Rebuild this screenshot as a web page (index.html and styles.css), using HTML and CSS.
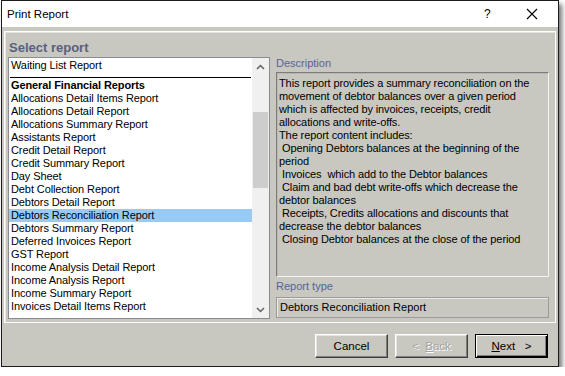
FILE: index.html
```html
<!DOCTYPE html>
<html>
<head>
<meta charset="utf-8">
<link rel="stylesheet" href="styles.css">
</head>
<body>
<div class="window">
  <div class="titlebar">
    <span class="title">Print Report</span>
    <span class="help">?</span>
    <span class="close"><svg width="12" height="12" viewBox="0 0 12 12"><path d="M1 1L11 11M11 1L1 11" stroke="#000" stroke-width="1.1" fill="none"/></svg></span>
  </div>
  <div class="body">
    <div class="panel">
      <div class="left">
        <div class="heading">Select report</div>
        <div class="listbox">
          <div class="list">
            <div class="item">Waiting List Report</div>
            <div class="sep"></div>
            <div class="item bold">General Financial Reports</div>
            <div class="item">Allocations Detail Items Report</div>
            <div class="item">Allocations Detail Report</div>
            <div class="item">Allocations Summary Report</div>
            <div class="item">Assistants Report</div>
            <div class="item">Credit Detail Report</div>
            <div class="item">Credit Summary Report</div>
            <div class="item">Day Sheet</div>
            <div class="item">Debt Collection Report</div>
            <div class="item">Debtors Detail Report</div>
            <div class="item selected">Debtors Reconciliation Report</div>
            <div class="item">Debtors Summary Report</div>
            <div class="item">Deferred Invoices Report</div>
            <div class="item">GST Report</div>
            <div class="item">Income Analysis Detail Report</div>
            <div class="item">Income Analysis Report</div>
            <div class="item">Income Summary Report</div>
            <div class="item">Invoices Detail Items Report</div>
          </div>
          <div class="scrollbar">
            <div class="arrow"><svg width="9" height="6" viewBox="0 0 9 6"><path d="M1 5L4.5 1.5L8 5" stroke="#606060" stroke-width="1.5" fill="none"/></svg></div>
            <div class="track"><div class="thumb"></div></div>
            <div class="arrow"><svg width="9" height="6" viewBox="0 0 9 6"><path d="M1 1L4.5 4.5L8 1" stroke="#606060" stroke-width="1.5" fill="none"/></svg></div>
          </div>
        </div>
      </div>
      <div class="right">
        <div class="label">Description</div>
        <div class="desc">
          <div>This report provides a summary reconciliation on the</div>
          <div>movement of debtor balances over a given period</div>
          <div>which is affected by invoices, receipts, credit</div>
          <div>allocations and write-offs.</div>
          <div>The report content includes:</div>
          <div> Opening Debtors balances at the beginning of the</div>
          <div>period</div>
          <div> Invoices  which add to the Debtor balances</div>
          <div> Claim and bad debt write-offs which decrease the</div>
          <div>debtor balances</div>
          <div> Receipts, Credits allocations and discounts that</div>
          <div>decrease the debtor balances</div>
          <div> Closing Debtor balances at the close of the period</div>
        </div>
        <div class="label label-type">Report type</div>
        <div class="field">Debtors Reconciliation Report</div>
      </div>
    </div>
    <div class="buttons">
      <div class="btn">Cancel</div>
      <div class="btn disabled">&lt;&nbsp;&nbsp;<u>B</u>ack</div>
      <div class="btn default"><u>N</u>ext&nbsp;&nbsp;&nbsp;&gt;</div>
    </div>
  </div>
</div>
</body>
</html>
```
FILE: styles.css
```css
html, body {
  margin: 0;
  padding: 0;
  background: #ffffff;
}
body {
  font-family: "Liberation Sans", Arial, sans-serif;
  font-size: 11px;
  color: #000;
}
.window {
  box-sizing: border-box;
  width: 558px;
  height: 367px;
  margin-left: 1px;
  border: 1px solid #1c1c1c;
  background: #c8c7c0;
  box-shadow: 3px 4px 5px rgba(0, 0, 0, 0.55);
  display: flex;
  flex-direction: column;
}
.titlebar {
  height: 26px;
  background: #ffffff;
  display: flex;
  align-items: center;
  flex-shrink: 0;
}
.title {
  font-size: 11.5px;
  margin-left: 5px;
  flex: 1;
  padding-bottom: 1px;
}
.help {
  font-size: 12px;
  width: 12px;
  margin-right: 30px;
}
.close {
  display: flex;
  margin-right: 20px;
}
.body {
  flex: 1;
  display: flex;
  flex-direction: column;
  padding-top: 4px;
}
.panel {
  box-sizing: border-box;
  height: 292px;
  margin: 0 2px;
  border: 1px solid #ffffff;
  box-shadow: inset 1px 1px 0 #e4e3de;
  display: flex;
  padding-left: 3px;
}
.left {
  display: flex;
  flex-direction: column;
  width: 262px;
}
.heading {
  font-size: 13px;
  font-weight: bold;
  color: #58617f;
  line-height: 16px;
  margin-top: 8px;
  margin-bottom: 1px;
  padding-left: 1px;
}
.listbox {
  box-sizing: border-box;
  height: 262px;
  border: 1px solid #8a8c92;
  background: #ffffff;
  display: flex;
  overflow: hidden;
}
.list {
  width: 243px;
  overflow: hidden;
  padding-top: 1px;
  letter-spacing: -0.1px;
}
.item {
  height: 13px;
  line-height: 13px;
  padding-left: 2px;
  white-space: nowrap;
}
.item.bold {
  font-weight: bold;
}
.item.selected {
  background: #99c9f5;
}
.sep {
  box-sizing: border-box;
  height: 6px;
  margin: 0 1px 1px 1px;
  border-bottom: 1px solid #000;
}
.scrollbar {
  width: 17px;
  background: #f0f0f0;
  display: flex;
  flex-direction: column;
}
.arrow {
  height: 17px;
  display: flex;
  align-items: center;
  justify-content: center;
}
.track {
  flex: 1;
  padding-top: 37px;
}
.thumb {
  height: 76px;
  background: #cdcdcd;
  margin: 0 1px;
}
.right {
  display: flex;
  flex-direction: column;
  width: 273px;
  margin-left: 6px;
}
.label {
  color: #56649a;
  line-height: 13px;
  margin-top: 25px;
}
.label-type {
  margin-top: 3px;
}
.desc {
  box-sizing: border-box;
  height: 205px;
  margin-top: 2px;
  border: 1px solid;
  border-color: #7c7c7c #f4f4f4 #f4f4f4 #7c7c7c;
  box-shadow: inset 1px 1px 0 #b8b7b0;
  padding: 4px 0 0 2px;
  letter-spacing: -0.1px;
}
.desc div {
  line-height: 13px;
  white-space: pre;
}
.field {
  box-sizing: border-box;
  height: 21px;
  margin-top: 4px;
  border: 1px solid #9b9b9b;
  box-shadow: inset 1px 1px 0 #e9e9e6;
  line-height: 19px;
  padding-left: 3px;
}
.buttons {
  display: flex;
  justify-content: flex-end;
  gap: 7px;
  padding-right: 10px;
  margin-top: 11px;
}
.btn {
  box-sizing: border-box;
  width: 73px;
  height: 24px;
  border: 1px solid;
  border-color: #ffffff #404040 #404040 #ffffff;
  box-shadow: inset -1px -1px 0 #808080, inset 1px 1px 0 #e3e3e3;
  display: flex;
  align-items: center;
  justify-content: center;
  font-size: 11.5px;
}
.btn.disabled {
  color: #a3a3a3;
  text-shadow: 1px 1px 0 #ffffff;
}
.btn.default {
  border: 1px solid #000;
  box-shadow: inset 1px 1px 0 #ffffff, inset -1px -1px 0 #000, inset -2px -2px 0 #808080;
}
u {
  text-decoration: underline;
  text-underline-offset: 1px;
}
```
